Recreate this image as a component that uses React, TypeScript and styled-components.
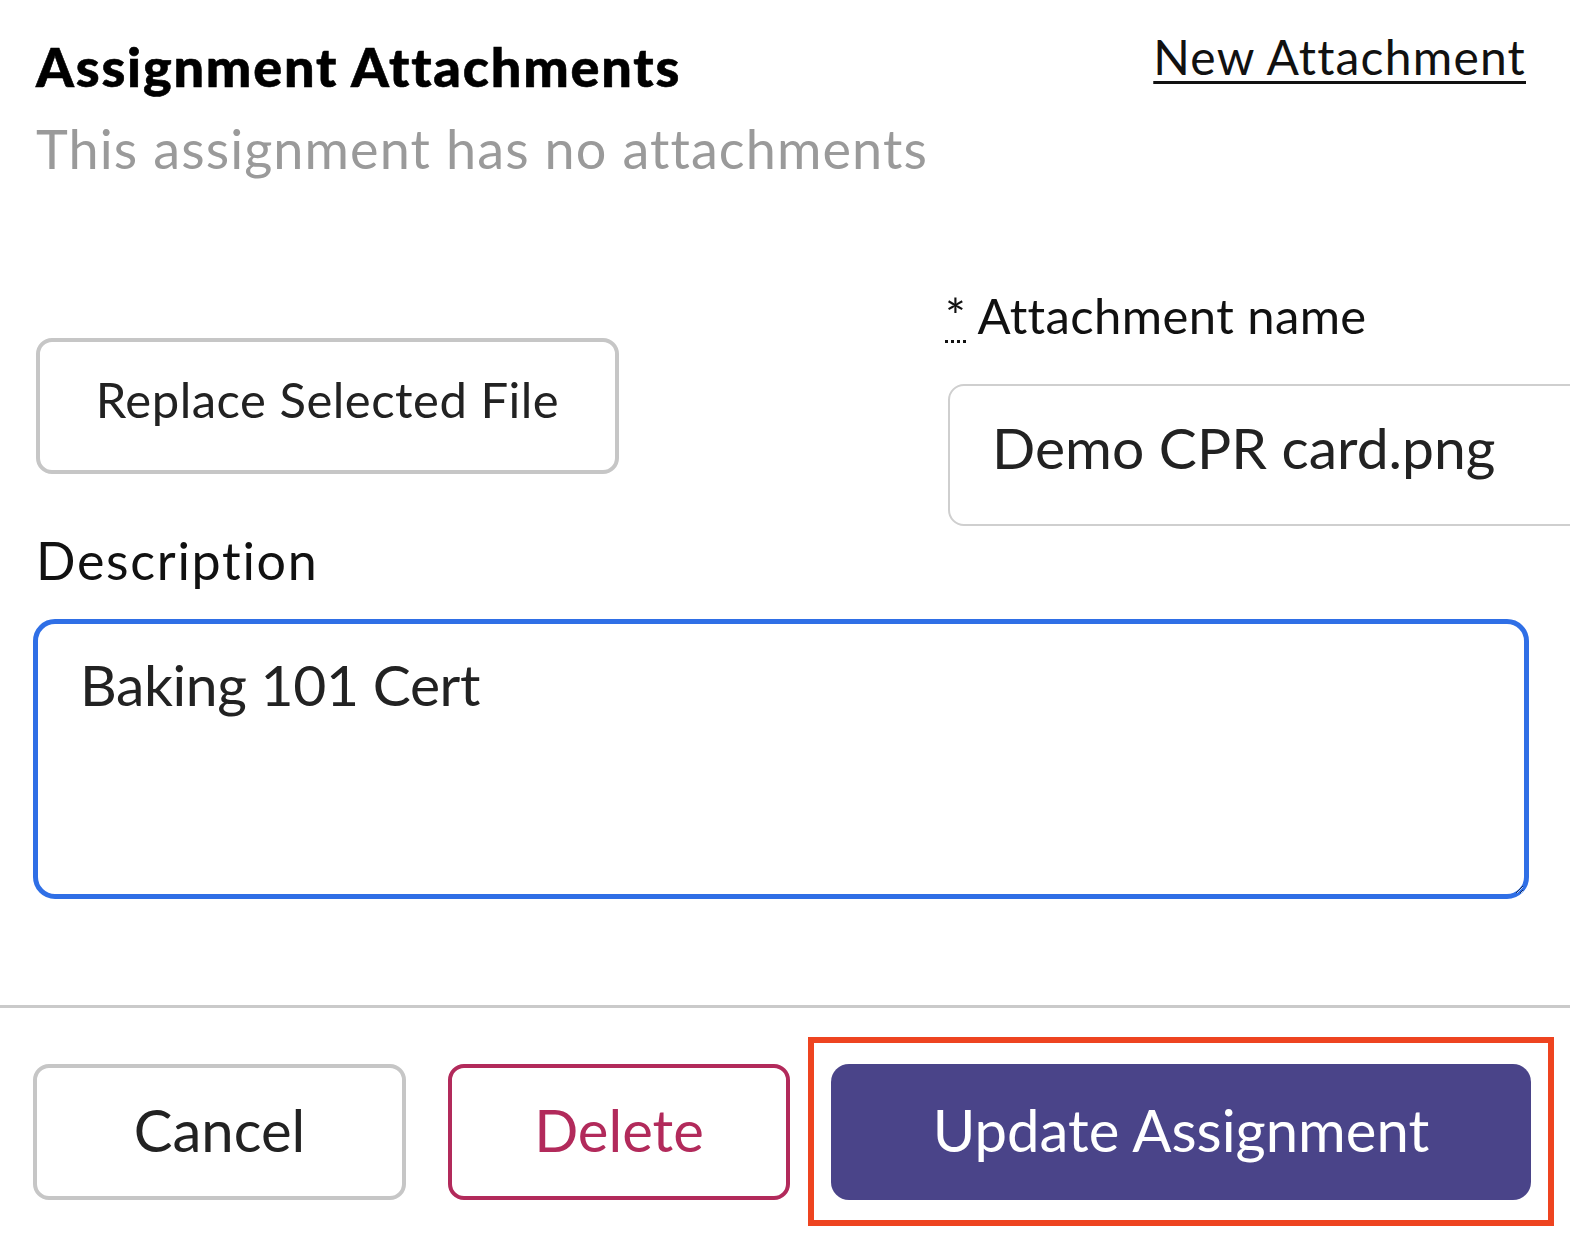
import React from "react";
import styled, { createGlobalStyle } from "styled-components";

const GlobalStyle = createGlobalStyle`
  html, body {
    margin: 0;
    padding: 0;
    background: #ffffff;
    overflow: hidden;
  }
  body {
    font-family: "Lato", "Noto Sans", sans-serif;
    color: #111;
  }
`;

export default function App() {
  return (
    <>
      <GlobalStyle />
      <Modal>
        <Body>
          <Header>
            <Title>Assignment Attachments</Title>
            <NewLink href="#">New Attachment</NewLink>
          </Header>
          <Empty>This assignment has no attachments</Empty>

          <FileRow>
            <OutlineButton $size={49} $width={583} $spacing={0.5}>
              Replace Selected File
            </OutlineButton>
            <Field>
              <Label htmlFor="attachment-name">
                <Required title="required">*</Required> Attachment name
              </Label>
              <NameInput id="attachment-name" defaultValue="Demo CPR card.png" />
            </Field>
          </FileRow>

          <Label htmlFor="description" $size={52}>
            Description
          </Label>
          <DescriptionArea id="description" defaultValue="Baking 101 Cert" autoFocus />
        </Body>

        <Footer>
          <OutlineButton $size={58} $width={373}>
            Cancel
          </OutlineButton>
          <OutlineButton $size={58} $width={342} $danger>
            Delete
          </OutlineButton>
          <Highlight>
            <PrimaryButton>Update Assignment</PrimaryButton>
          </Highlight>
        </Footer>
      </Modal>
    </>
  );
}

const Modal = styled.div`
  width: 1570px;
  height: 1254px;
  display: flex;
  flex-direction: column;
`;

const Body = styled.div`
  padding: 28px 44px 0 36px;
  display: flex;
  flex-direction: column;
`;

const Header = styled.div`
  display: flex;
  justify-content: space-between;
  align-items: flex-start;
`;

const Title = styled.h1`
  margin: 7px 0 0;
  font-size: 54px;
  line-height: 1.2;
  font-weight: 900;
  color: #000;
  letter-spacing: 1.8px;
  -webkit-text-stroke: 0.6px #000;
`;

const NewLink = styled.a`
  font-size: 48px;
  line-height: 1.2;
  color: #111;
  letter-spacing: 1.2px;
  text-decoration: underline;
  text-decoration-thickness: 3px;
  text-underline-offset: 6px;
`;

const Empty = styled.p`
  margin: 17px 0 0;
  font-size: 54px;
  line-height: 1.2;
  letter-spacing: 1.1px;
  color: #9a9a9a;
`;

const FileRow = styled.div`
  margin-top: 104px;
  display: grid;
  grid-template-columns: 909px 1fr;
  align-items: center;
`;

const Field = styled.div`
  display: flex;
  flex-direction: column;
  gap: 40px;
  min-width: 0;
`;

const Label = styled.label<{ $size?: number }>`
  font-size: ${(p) => p.$size ?? 49}px;
  line-height: 1.2;
  letter-spacing: ${(p) => (p.$size ? "1.7px" : "0.4px")};
  color: #111;
  margin-top: ${(p) => (p.$size ? "3px" : "0")};
`;

const Required = styled.abbr`
  text-decoration: underline dotted;
  text-decoration-thickness: 3px;
  text-underline-offset: 6px;
  cursor: help;
`;

const NameInput = styled.input`
  box-sizing: border-box;
  width: 700px;
  height: 142px;
  margin-left: 3px;
  padding: 0 40px 16px 42px;
  border: 2px solid #cfcfcf;
  border-radius: 16px;
  font-family: inherit;
  font-size: 57px;
  color: #222;
  outline: none;
`;

const DescriptionArea = styled.textarea`
  box-sizing: border-box;
  margin: 27px -3px 0;
  height: 280px;
  padding: 25px 42px;
  border: 5px solid #2f6fe6;
  border-radius: 22px;
  font-family: inherit;
  font-size: 57px;
  line-height: 1.25;
  letter-spacing: -0.4px;
  color: #222;
  caret-color: #222;
  outline: none;
  resize: vertical;
`;

const Footer = styled.div`
  margin-top: 106px;
  border-top: 3px solid #cacaca;
  padding: 56px 0 0 33px;
  display: flex;
  gap: 42px;
`;

const OutlineButton = styled.button<{
  $size: number;
  $width: number;
  $danger?: boolean;
  $spacing?: number;
}>`
  box-sizing: border-box;
  width: ${(p) => p.$width}px;
  height: 136px;
  padding: 0 0 ${(p) => (p.$size < 52 ? 14 : 4)}px;
  background: #fff;
  border: 4px solid ${(p) => (p.$danger ? "#b22a5b" : "#c6c6c6")};
  border-radius: 16px;
  font-family: inherit;
  font-size: ${(p) => p.$size}px;
  letter-spacing: ${(p) => p.$spacing ?? 0}px;
  color: ${(p) => (p.$danger ? "#b22a5b" : "#222")};
  cursor: pointer;
`;

const Highlight = styled.div`
  position: relative;
  margin-left: -1px;

  &::after {
    content: "";
    position: absolute;
    inset: -27px -23px -26px -23px;
    border: 6px solid #ee4420;
    pointer-events: none;
  }
`;

const PrimaryButton = styled.button`
  box-sizing: border-box;
  width: 700px;
  height: 136px;
  padding: 0 0 4px;
  background: #4a4489;
  border: none;
  border-radius: 18px;
  font-family: inherit;
  font-size: 58px;
  color: #fff;
  cursor: pointer;
`;
